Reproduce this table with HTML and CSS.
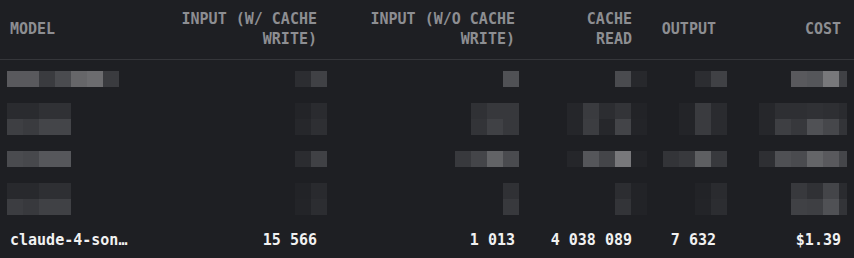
FILE: index.html
```html
<!DOCTYPE html>
<html lang="en">
<head>
<meta charset="utf-8">
<title>Usage by model</title>
<link rel="stylesheet" href="styles.css">
</head>
<body>
<div class="usage">
  <div class="cols head">
    <div class="cell left">MODEL</div>
    <div class="cell">INPUT (W/ CACHE WRITE)</div>
    <div class="cell">INPUT (W/O CACHE WRITE)</div>
    <div class="cell narrow">CACHE READ</div>
    <div class="cell">OUTPUT</div>
    <div class="cell">COST</div>
  </div>

  <div class="redacted" aria-label="redacted rows">
    <div class="mosaic">
      <div class="mrow"><b class="g5a"></b><b class="g5a"></b><b class="g3a"></b><b class="g4a"></b><b class="g66"></b><b class="g6c"></b><b class="g3a"></b><i class="s11"></i><b class="g2c"></b><b class="g40"></b><i class="s11"></i><b class="g50"></b><i class="s6"></i><b class="g4a"></b><b class="g27"></b><i class="s3"></i><b class="g2c"></b><b class="g40"></b><i class="s4"></i><b class="g5a"></b><b class="g55"></b><b class="g78"></b><b class="g40"></b></div>
      <div class="mrow"></div>
      <div class="mrow"><b class="g2a"></b><b class="g2a"></b><b class="g30"></b><b class="g30"></b><i class="s14"></i><b class="g23"></b><b class="g2a"></b><i class="s9"></i><b class="g30"></b><b class="g37"></b><b class="g37"></b><i class="s3"></i><b class="g25"></b><b class="g3a"></b><b class="g2c"></b><b class="g33"></b><b class="g22"></b><i class="s2"></i><b class="g23"></b><b class="g3a"></b><b class="g2a"></b><i class="s2"></i><b class="g26"></b><b class="g2e"></b><b class="g2e"></b><b class="g30"></b><b class="g2e"></b><b class="g2a"></b></div>
      <div class="mrow"><b class="g3e"></b><b class="g3a"></b><b class="g44"></b><b class="g44"></b><i class="s14"></i><b class="g26"></b><b class="g2e"></b><i class="s9"></i><b class="g33"></b><b class="g40"></b><b class="g37"></b><i class="s3"></i><b class="g25"></b><b class="g3c"></b><b class="g26"></b><b class="g43"></b><b class="g23"></b><i class="s2"></i><b class="g23"></b><b class="g3a"></b><b class="g2a"></b><i class="s2"></i><b class="g26"></b><b class="g3e"></b><b class="g37"></b><b class="g50"></b><b class="g46"></b><b class="g33"></b></div>
      <div class="mrow"></div>
      <div class="mrow"><b class="g4a"></b><b class="g47"></b><b class="g56"></b><b class="g56"></b><i class="s14"></i><b class="g2b"></b><b class="g40"></b><i class="s8"></i><b class="g38"></b><b class="g44"></b><b class="g62"></b><b class="g4a"></b><i class="s3"></i><b class="g25"></b><b class="g55"></b><b class="g44"></b><b class="g78"></b><b class="g23"></b><i class="s1"></i><b class="g33"></b><b class="g38"></b><b class="g5e"></b><b class="g38"></b><i class="s2"></i><b class="g2e"></b><b class="g4f"></b><b class="g4a"></b><b class="g64"></b><b class="g5a"></b><b class="g45"></b></div>
      <div class="mrow"></div>
      <div class="mrow"><b class="g28"></b><b class="g28"></b><b class="g2e"></b><b class="g2e"></b><i class="s14"></i><b class="g22"></b><b class="g29"></b><i class="s11"></i><b class="g30"></b><i class="s6"></i><b class="g2c"></b><b class="g22"></b><i class="s3"></i><b class="g22"></b><b class="g2a"></b><i class="s4"></i><b class="g38"></b><b class="g30"></b><b class="g44"></b><b class="g2a"></b></div>
      <div class="mrow"><b class="g3c"></b><b class="g38"></b><b class="g40"></b><b class="g40"></b><i class="s14"></i><b class="g23"></b><b class="g2c"></b><i class="s11"></i><b class="g38"></b><i class="s6"></i><b class="g33"></b><b class="g22"></b><i class="s3"></i><b class="g23"></b><b class="g2c"></b><i class="s4"></i><b class="g40"></b><b class="g3e"></b><b class="g50"></b><b class="g33"></b></div>
    </div>
  </div>

  <div class="cols row">
    <div class="cell left"><span class="model">claude-4-sonnet-20250514</span></div>
    <div class="cell">15 566</div>
    <div class="cell">1 013</div>
    <div class="cell narrow">4 038 089</div>
    <div class="cell">7 632</div>
    <div class="cell">$1.39</div>
  </div>
</div>
</body>
</html>
```

FILE: styles.css
```css
html, body {
  margin: 0;
  padding: 0;
  background: #1e1f23;
}

body {
  width: 854px;
  height: 258px;
  overflow: hidden;
  font-family: "DejaVu Sans Mono", "Liberation Mono", monospace;
  font-size: 15px;
  line-height: 20px;
}

.usage {
  width: 854px;
}

.cols {
  display: grid;
  grid-template-columns: 157px 150px 198px 117px 84px 125px;
  padding: 0 13px 0 10px;
  align-items: center;
}

.cell {
  text-align: right;
}

.cell.left {
  text-align: left;
}

.cell.narrow {
  padding-left: 30px;
}

.head {
  padding-top: 9px;
  padding-bottom: 10px;
  border-bottom: 1px solid #35363a;
  color: #8d8e92;
  font-weight: bold;
}

.row {
  height: 40px;
  color: #f1f1f1;
  font-weight: bold;
}

.model {
  display: block;
  max-width: 120px;
  white-space: nowrap;
  overflow: hidden;
  text-overflow: ellipsis;
}

.redacted {
  height: 160px;
  padding: 11px 0 0 7px;
  box-sizing: border-box;
}

.mosaic {
  width: 840px;
  overflow: hidden;
}

.mrow {
  display: flex;
  height: 16px;
}

.mrow b, .mrow i {
  flex: none;
  height: 16px;
}

.mrow b { width: 16px; }

.s1 { width: 16px; }
.s2 { width: 32px; }
.s3 { width: 48px; }
.s4 { width: 64px; }
.s6 { width: 96px; }
.s8 { width: 128px; }
.s9 { width: 144px; }
.s11 { width: 176px; }
.s14 { width: 224px; }

.g22 { background: #222327; }
.g23 { background: #232428; }
.g25 { background: #25262a; }
.g26 { background: #26272b; }
.g27 { background: #27282c; }
.g28 { background: #28292d; }
.g29 { background: #292a2e; }
.g2a { background: #2a2b2f; }
.g2b { background: #2b2c30; }
.g2c { background: #2c2d31; }
.g2e { background: #2e2f33; }
.g30 { background: #303135; }
.g33 { background: #333438; }
.g37 { background: #37383c; }
.g38 { background: #38393d; }
.g3a { background: #3a3b3f; }
.g3c { background: #3c3d41; }
.g3e { background: #3e3f43; }
.g40 { background: #404145; }
.g43 { background: #434448; }
.g44 { background: #444549; }
.g45 { background: #45464a; }
.g46 { background: #46474b; }
.g47 { background: #47484c; }
.g4a { background: #4a4b4f; }
.g4f { background: #4f5054; }
.g50 { background: #505155; }
.g55 { background: #55565a; }
.g56 { background: #56575b; }
.g5a { background: #59595d; }
.g5e { background: #5e5f62; }
.g62 { background: #626366; }
.g64 { background: #646568; }
.g66 { background: #666669; }
.g6c { background: #6c6c6f; }
.g78 { background: #78787b; }
```
